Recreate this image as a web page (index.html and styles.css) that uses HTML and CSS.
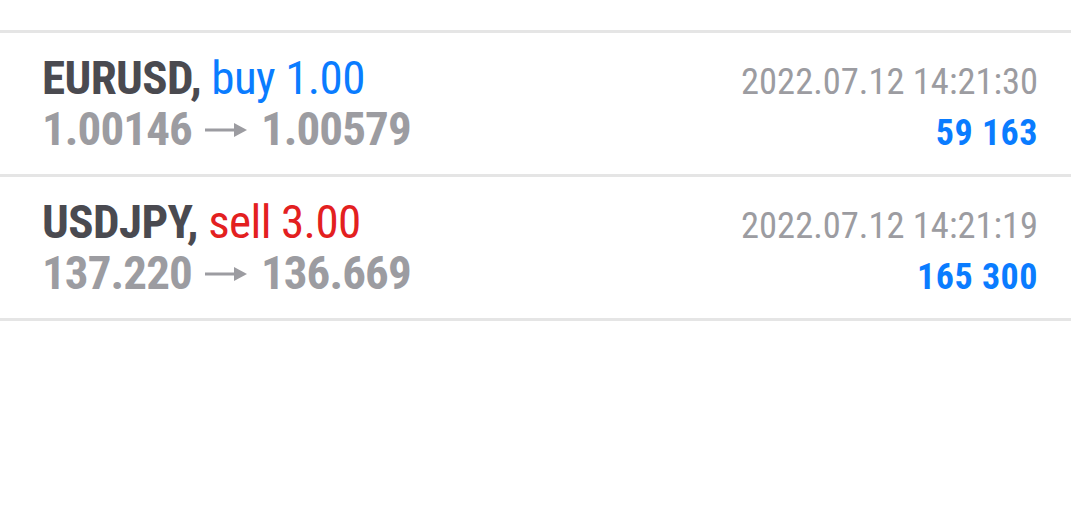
FILE: index.html
```html
<!DOCTYPE html>
<html lang="en">
<head>
  <meta charset="UTF-8" />
  <meta name="viewport" content="width=device-width, initial-scale=1.0"/>
  <title>History</title>
  <link rel="stylesheet" href="styles.css">
</head>
<body>
  <div class="list">
    <div class="deal">
      <div class="deal-left">
        <div class="title"><span class="symbol">EURUSD,</span> <span class="buy">buy 1.00</span></div>
        <div class="prices">1.00146<svg class="arrow" viewBox="0 0 42 14"><rect x="0" y="5.5" width="31" height="3"/><polygon points="29,0 42,7 29,14"/></svg>1.00579</div>
      </div>
      <div class="deal-right">
        <div class="time">2022.07.12 14:21:30</div>
        <div class="profit">59 163</div>
      </div>
    </div>
    <div class="deal">
      <div class="deal-left">
        <div class="title"><span class="symbol">USDJPY,</span> <span class="sell">sell 3.00</span></div>
        <div class="prices">137.220<svg class="arrow" viewBox="0 0 42 14"><rect x="0" y="5.5" width="31" height="3"/><polygon points="29,0 42,7 29,14"/></svg>136.669</div>
      </div>
      <div class="deal-right">
        <div class="time">2022.07.12 14:21:19</div>
        <div class="profit">165 300</div>
      </div>
    </div>
  </div>
</body>
</html>
```

FILE: styles.css
```css
:root {
  --dark: #4a4a50;
  --gray: #9c9ca1;
  --blue: #0a7cff;
  --red: #e3201f;
  --line: #e5e5e5;
}

* {
  box-sizing: border-box;
}

body {
  margin: 0;
  background: #fff;
  font-family: "Roboto Condensed", Roboto, sans-serif;
}

.list {
  padding-top: 30px;
}

.deal {
  display: flex;
  justify-content: space-between;
  border-top: 3px solid var(--line);
  padding: 19px 33px 0 42px;
  height: 144px;
}

.deal:last-child {
  border-bottom: 3px solid var(--line);
  height: 147px;
}

.deal-left {
  font-size: 47px;
  line-height: 51px;
  letter-spacing: -0.6px;
}

.symbol {
  color: var(--dark);
  font-weight: 700;
}

.buy {
  color: var(--blue);
}

.sell {
  color: var(--red);
}

.prices {
  color: var(--gray);
  font-weight: 700;
  display: flex;
  align-items: center;
  letter-spacing: -0.9px;
}

.arrow {
  width: 42px;
  height: 14px;
  margin: 2px 14px 0 13px;
  fill: var(--gray);
}

.deal-right {
  text-align: right;
  padding-top: 6px;
}

.time {
  color: var(--gray);
  font-size: 36.5px;
  line-height: 48px;
}

.profit {
  color: var(--blue);
  font-size: 36px;
  font-weight: 700;
  line-height: 44px;
  letter-spacing: 0.5px;
  margin-top: 5px;
}
```
